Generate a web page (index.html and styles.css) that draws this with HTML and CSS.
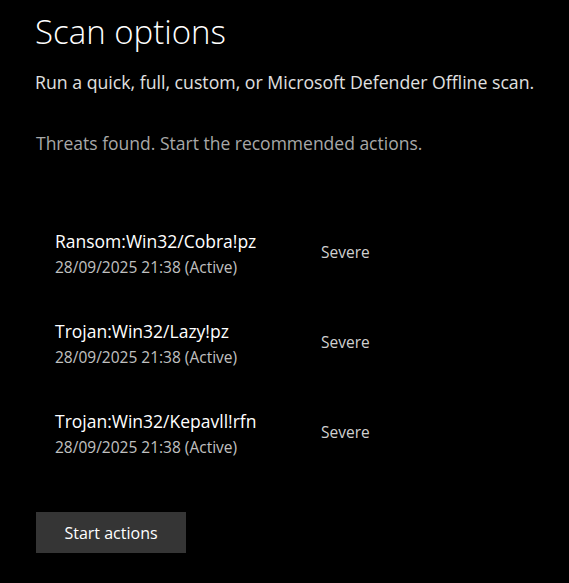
FILE: index.html
```html
<!DOCTYPE html>
<html>
<head>
<meta charset="utf-8">
<link rel="stylesheet" href="styles.css">
</head>
<body>
<div class="page">
  <h1 class="title">Scan options</h1>
  <p class="subtitle">Run a quick, full, custom, or Microsoft Defender Offline scan.</p>
  <p class="status">Threats found. Start the recommended actions.</p>
  <div class="threats">
    <div class="threat">
      <div class="info">
        <div class="name">Ransom:Win32/Cobra!pz</div>
        <div class="date">28/09/2025 21:38 (Active)</div>
      </div>
      <div class="level">Severe</div>
    </div>
    <div class="threat">
      <div class="info">
        <div class="name">Trojan:Win32/Lazy!pz</div>
        <div class="date">28/09/2025 21:38 (Active)</div>
      </div>
      <div class="level">Severe</div>
    </div>
    <div class="threat">
      <div class="info">
        <div class="name">Trojan:Win32/Kepavll!rfn</div>
        <div class="date">28/09/2025 21:38 (Active)</div>
      </div>
      <div class="level">Severe</div>
    </div>
  </div>
  <button class="btn">Start actions</button>
</div>
</body>
</html>
```
FILE: styles.css
```css
html, body {
  margin: 0;
  padding: 0;
  background: #000;
  height: 100%;
}
body {
  font-family: "Open Sans", "Noto Sans", sans-serif;
  color: #fff;
}
.page {
  padding: 12px 0 0 35px;
  display: flex;
  flex-direction: column;
}
.title {
  margin: 0;
  font-weight: 300;
  font-size: 33px;
  line-height: 40px;
  color: #fff;
}
.subtitle {
  margin: 18px 0 0 0;
  font-size: 17.7px;
  line-height: 24px;
  color: #e0e0e0;
}
.status {
  margin: 37px 0 0 1px;
  font-size: 17.5px;
  line-height: 24px;
  color: #a8a8a8;
}
.threats {
  margin-top: 75px;
  padding-left: 20px;
  display: flex;
  flex-direction: column;
  gap: 41px;
}
.threat {
  display: flex;
  align-items: center;
}
.info {
  width: 266px;
  display: flex;
  flex-direction: column;
}
.name {
  font-size: 17.5px;
  line-height: 22px;
  color: #fff;
}
.date {
  margin-top: 3px;
  font-size: 15.5px;
  line-height: 24px;
  color: #c0c0c0;
}
.level {
  font-size: 15.5px;
  margin-bottom: 6px;
  color: #d0d0d0;
}
.btn {
  margin-top: 53px;
  align-self: flex-start;
  width: 150px;
  height: 41px;
  margin-left: 1px;
  background: #353535;
  border: none;
  color: #fff;
  font-family: inherit;
  font-size: 16px;
}
```
